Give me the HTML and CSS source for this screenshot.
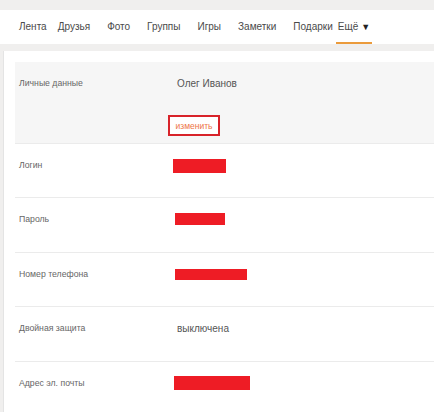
FILE: index.html
```html
<!DOCTYPE html>
<html lang="ru">
<head>
    <meta charset="UTF-8">
    <meta name="viewport" content="width=device-width, initial-scale=1.0">
    <title>Настройки профиля</title>
    <link rel="stylesheet" href="styles.css">
</head>
<body>

<!-- Top navigation -->
<div class="nav">
    <a class="nav-link nav-first">Лента</a>
    <a class="nav-link">Друзья</a>
    <a class="nav-link">Фото</a>
    <a class="nav-link">Группы</a>
    <a class="nav-link">Игры</a>
    <a class="nav-link">Заметки</a>
    <a class="nav-link">Подарки</a>
    <a class="nav-link nav-more">Ещё<span class="arrow">&#9660;</span></a>
</div>

<!-- Profile settings -->
<div class="card">
    <div class="row row-main">
        <div class="label">Личные данные</div>
        <div class="value">
            <div class="value-text">Олег Иванов</div>
            <button class="edit-btn">изменить</button>
        </div>
    </div>
    <div class="row">
        <div class="label">Логин</div>
        <div class="value"><div class="hidden-bar bar-login"></div></div>
    </div>
    <div class="row">
        <div class="label">Пароль</div>
        <div class="value"><div class="hidden-bar bar-password"></div></div>
    </div>
    <div class="row">
        <div class="label">Номер телефона</div>
        <div class="value"><div class="hidden-bar bar-phone"></div></div>
    </div>
    <div class="row">
        <div class="label">Двойная защита</div>
        <div class="value"><div class="value-text">выключена</div></div>
    </div>
    <div class="row row-last">
        <div class="label">Адрес эл. почты</div>
        <div class="value"><div class="hidden-bar bar-email"></div></div>
    </div>
</div>

</body>
</html>
```

FILE: styles.css
```css
body {
    margin: 0;
    padding-top: 10px;
    font-family: "Liberation Sans", Arial, sans-serif;
    background-color: #f0efee;
}

/* navigation bar */
.nav {
    display: flex;
    height: 34px;
    padding-left: 19px;
    gap: 17px;
    background-color: #fff;
}
.nav-link {
    display: flex;
    align-items: center;
    height: 31px;
    padding-top: 1px;
    font-size: 10px;
    color: #4a4a4a;
    border-bottom: 2px solid transparent;
}
.nav-first {
    margin-right: -6px;
}
.nav-more {
    margin-left: -14px;
    padding: 1px 2px 0 2px;
    border-bottom-color: #eb9b3c;
}
.arrow {
    font-size: 9px;
    margin-left: 3px;
    color: #222;
}

/* settings card */
.card {
    margin: 7px 0 0 3px;
    padding: 11px 0 0 11px;
    background-color: #fff;
    border-left: 1px solid #e4e4e4;
}
.row {
    display: flex;
    height: 54px;
    box-sizing: border-box;
    padding-left: 4px;
    border-bottom: 1px solid #ebebeb;
}
.row:nth-child(odd) {
    height: 55px;
}
.row.row-main {
    height: 82px;
    background-color: #f6f6f6;
}
.row.row-last {
    height: 50px;
    border-bottom: none;
}
.label {
    width: 155px;
    padding-top: 14px;
    font-size: 8.7px;
    line-height: 14px;
    color: #666;
}
.value {
    display: flex;
    flex-direction: column;
    align-items: flex-start;
}
.value-text {
    padding: 15px 0 0 3px;
    font-size: 10px;
    line-height: 14px;
    color: #555;
}
.edit-btn {
    margin: 24px 0 0 -6px;
    width: 52px;
    height: 21px;
    padding: 0;
    font-family: inherit;
    font-size: 8.5px;
    color: #ee7547;
    background-color: #fff;
    border: 2px solid #d8232a;
}

/* masked values */
.hidden-bar {
    background-color: #ee1c25;
}
.bar-login {
    width: 53px;
    height: 14px;
    margin-top: 15px;
    margin-left: -1px;
}
.bar-password {
    width: 50px;
    height: 12px;
    margin-top: 15px;
    margin-left: 1px;
}
.bar-phone {
    width: 72px;
    height: 11px;
    margin-top: 16px;
    margin-left: 1px;
}
.bar-email {
    width: 76px;
    height: 14px;
    margin-top: 14px;
}
```
